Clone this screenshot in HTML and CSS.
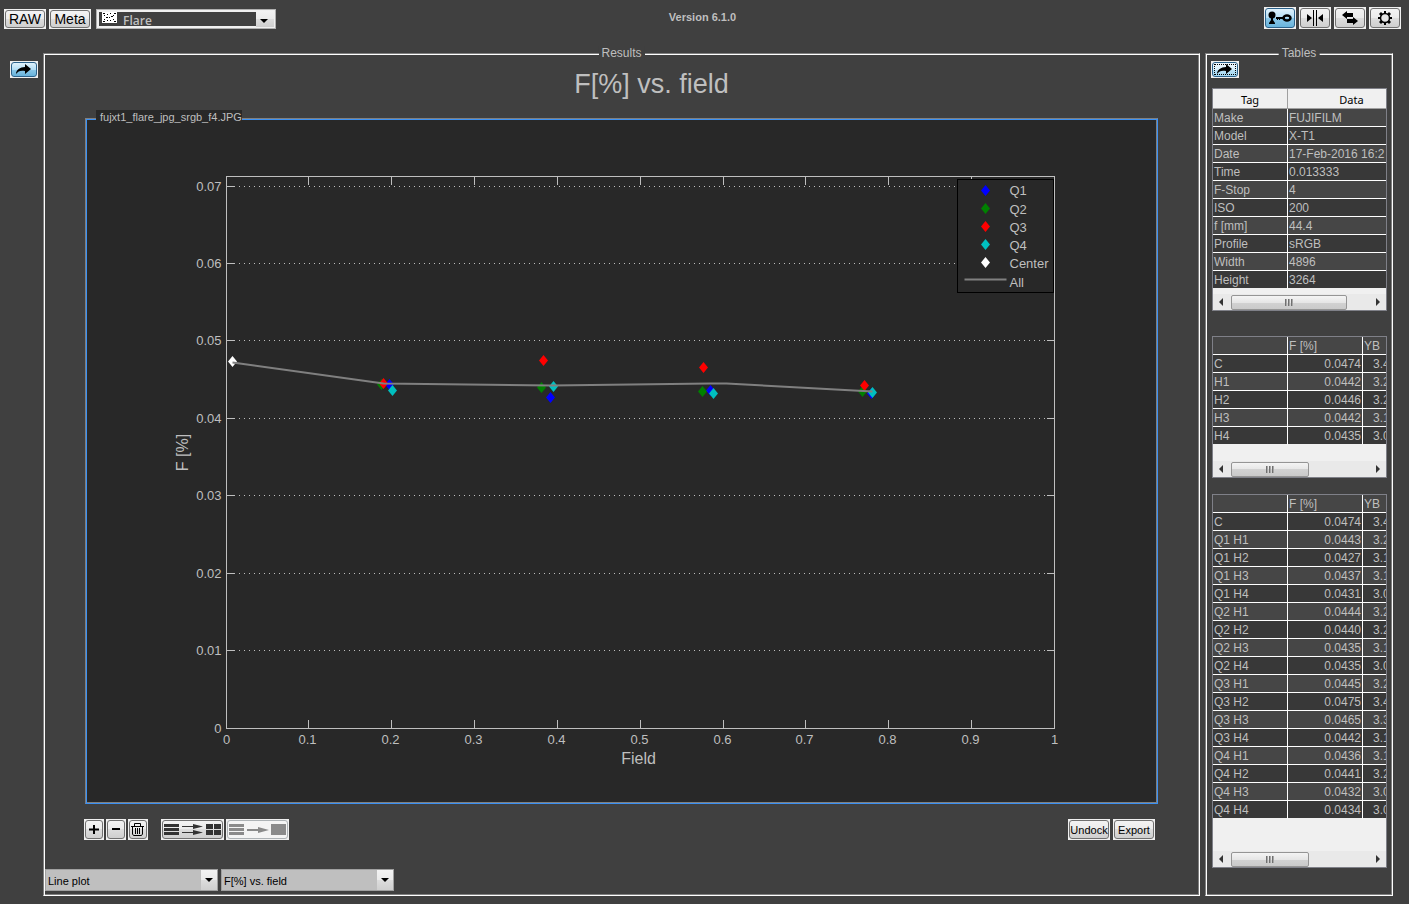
FILE: index.html
```html
<!DOCTYPE html>
<html lang="en">
<head>
    <meta charset="UTF-8">
    <meta name="viewport" content="width=device-width, initial-scale=1.0">
    <title>Flare</title>
    <link rel="stylesheet" href="styles.css">
</head>
<body>
    <header class="topbar">
        <div class="topbar-left">
            <button class="btn btn-mode">RAW</button>
            <button class="btn btn-mode">Meta</button>
            <div class="module-select">
                <svg class="module-icon" width="15" height="11" viewBox="0 0 15 11" shape-rendering="crispEdges">
                    <rect width="15" height="11" fill="#fff"/>
                    <path d="M1 1h2v1h-2zM2 3h1v1h-1zM5 2h1v1h-1zM8 1h1v1h-1zM12 1h2v1h-2zM11 3h1v1h-1zM4 5h2v1h-2zM7 5h1v1h-1zM9 4h2v1h-2zM2 7h1v1h-1zM5 8h1v1h-1zM8 8h1v1h-1zM11 7h1v1h-1zM1 9h2v1h-2zM12 9h2v1h-2z" fill="#000"/>
                </svg>
                <select aria-label="Module"><option>Flare</option></select>
                <span class="arrow"></span>
            </div>
        </div>
        <div class="version">Version 6.1.0</div>
        <div class="topbar-right">
            <button class="btn btn-tool active" aria-label="Key">
                <svg width="24" height="14" viewBox="0 0 24 14">
                    <circle cx="4" cy="4" r="3.500"/>
                    <path d="M3 5h2v4l2 3v1H1v-1l2-3z"/>
                    <path d="M8 6h9v2h-5v1h-1V8h-1v1H9V8H8z"/>
                    <ellipse cx="19" cy="7" rx="3.500" ry="2.500" fill="none" stroke="#000" stroke-width="2.500"/>
                </svg>
            </button>
            <button class="btn btn-tool" aria-label="Split">
                <svg width="18" height="16" viewBox="0 0 18 16">
                    <path d="M1 4l5 4-5 4zM17 4l-5 4 5 4zM7 0h1v16H7zM10 0h1v16h-1z"/>
                </svg>
            </button>
            <button class="btn btn-tool" aria-label="Swap">
                <svg width="18" height="14" viewBox="0 0 18 14">
                    <path d="M1 4l5-4v2h6v4H6v2zM17 10l-5 4v-2H6V8h6V6z"/>
                </svg>
            </button>
            <button class="btn btn-tool" aria-label="Settings">
                <svg width="16" height="16" viewBox="0 0 16 16">
                    <path d="M7 1h2v3H7zM7 12h2v3H7zM1 7h3v2H1zM12 7h3v2h-3zM2 4l2-2 2 2-2 2zM10 4l2-2 2 2-2 2zM2 12l2-2 2 2-2 2zM10 12l2-2 2 2-2 2z"/>
                    <circle cx="8" cy="8" r="4.500" fill="#e4e4e4" stroke="#000" stroke-width="1.500"/>
                </svg>
            </button>
        </div>
    </header>

    <main class="workspace">
        <div class="side">
            <button class="btn btn-fold active" aria-label="Toggle panel">
                <svg width="18" height="11" viewBox="0 0 18 11"><path d="M1 10c0-4 4-7 9-7V0l6 5-6 5V7C6 6 3 7 1 10z"/></svg>
            </button>
        </div>

        <section class="frame results">
            <h2 class="frame-title">Results</h2>
            <h1 class="plot-title">F[%] vs. field</h1>

            <div class="frame plot-panel">
                <h3 class="file-title">fujxt1_flare_jpg_srgb_f4.JPG</h3>
                <svg class="plot" viewBox="0 0 1071 684">
                    <defs>
                        <path id="mark" d="M0-5.500L4.500 0 0 5.500-4.500 0z"/>
                    </defs>
                    <g transform="translate(140.500 57.500)">
                        <path class="gridline" d="M12.500 10H828M12.500 87H828M12.500 164H828M12.500 242H828M12.500 319H828M12.500 397H828M12.500 474H828"/>
                        <path class="axis" d="M0 0H828V552H0z"/>
                        <path class="axis" d="M82 0v8M165 0v8M248 0v8M331 0v8M414 0v8M497 0v8M579 0v8M662 0v8M745 0v8"/>
                        <path class="axis" d="M82 552v-9M165 552v-9M248 552v-9M331 552v-9M414 552v-9M497 552v-9M579 552v-9M662 552v-9M745 552v-9"/>
                        <path class="axis" d="M0 10h8M0 87h8M0 164h8M0 242h8M0 319h8M0 397h8M0 474h8"/>
                        <path class="axis" d="M828 10h-8M828 87h-8M828 164h-8M828 242h-8M828 319h-8M828 397h-8M828 474h-8"/>

                        <g class="tick tick-y">
                            <text x="-5" y="14">0.07</text>
                            <text x="-5" y="91">0.06</text>
                            <text x="-5" y="168">0.05</text>
                            <text x="-5" y="246">0.04</text>
                            <text x="-5" y="323">0.03</text>
                            <text x="-5" y="401">0.02</text>
                            <text x="-5" y="478">0.01</text>
                            <text x="-5" y="556">0</text>
                        </g>
                        <g class="tick tick-x">
                            <text x="0" y="567">0</text>
                            <text x="81" y="567">0.1</text>
                            <text x="164" y="567">0.2</text>
                            <text x="247" y="567">0.3</text>
                            <text x="330" y="567">0.4</text>
                            <text x="413" y="567">0.5</text>
                            <text x="496" y="567">0.6</text>
                            <text x="578" y="567">0.7</text>
                            <text x="661" y="567">0.8</text>
                            <text x="744" y="567">0.9</text>
                            <text x="828" y="567">1</text>
                        </g>
                        <text class="axis-label" x="412" y="587">Field</text>
                        <text class="axis-label" transform="translate(-39 276) rotate(-90)">F [%]</text>

                        <g class="q1">
                            <use href="#mark" x="163" y="208"/>
                            <use href="#mark" x="324" y="221"/>
                            <use href="#mark" x="484" y="214"/>
                            <use href="#mark" x="645" y="217"/>
                        </g>
                        <g class="q2">
                            <use href="#mark" x="155" y="208"/>
                            <use href="#mark" x="315" y="211"/>
                            <use href="#mark" x="476" y="215"/>
                            <use href="#mark" x="636" y="215"/>
                        </g>
                        <g class="q3">
                            <use href="#mark" x="157" y="207"/>
                            <use href="#mark" x="317" y="184"/>
                            <use href="#mark" x="477" y="191"/>
                            <use href="#mark" x="638" y="209"/>
                        </g>
                        <g class="q4">
                            <use href="#mark" x="166" y="214"/>
                            <use href="#mark" x="327" y="210"/>
                            <use href="#mark" x="487" y="217"/>
                            <use href="#mark" x="646" y="216"/>
                        </g>
                        <use class="center" href="#mark" x="6" y="185"/>
                        <path class="all" d="M6 186L157 207 325 209 484 207 500 207 646 215"/>

                        <rect class="legend-box" x="731" y="3" width="96" height="113"/>
                        <use class="q1" href="#mark" x="759" y="14"/>
                        <use class="q2" href="#mark" x="759" y="32"/>
                        <use class="q3" href="#mark" x="759" y="50"/>
                        <use class="q4" href="#mark" x="759" y="68"/>
                        <use class="center" href="#mark" x="759" y="86"/>
                        <path class="all" d="M738 103h42"/>
                        <g class="tick">
                            <text x="783" y="18">Q1</text>
                            <text x="783" y="37">Q2</text>
                            <text x="783" y="55">Q3</text>
                            <text x="783" y="73">Q4</text>
                            <text x="783" y="91">Center</text>
                            <text x="783" y="110">All</text>
                        </g>
                    </g>
                </svg>
            </div>

            <div class="plot-toolbar">
                <div class="group">
                    <button class="btn btn-sq" aria-label="Add">
                        <svg width="10" height="9" viewBox="0 0 10 9"><path d="M4 0h2v3.500h4v2H6V9H4V5.500H0v-2h4z"/></svg>
                    </button>
                    <button class="btn btn-sq" aria-label="Remove">
                        <svg width="8" height="9" viewBox="0 0 8 9"><path d="M0 3h8v2H0z"/></svg>
                    </button>
                    <button class="btn btn-sq" aria-label="Delete">
                        <svg width="14" height="13" viewBox="0 0 14 13" fill="none" stroke="#000">
                            <path d="M0 3.500h13M3.500 3V.5h6V3M1.500 4v7l1 1.500h8l1-1.500V4M4.500 5v6M6.500 5v6M8.500 5v6"/>
                        </svg>
                    </button>
                </div>
                <div class="group">
                    <button class="btn btn-layout" aria-label="Multiple plots">
                        <svg width="57" height="11" viewBox="0 0 57 11" fill="#333">
                            <path d="M0 0h15v3H0zM0 4h15v3H0zM0 8h15v3H0zM42 0h7v5h-7zM50 0h7v5h-7zM42 6h7v5h-7zM50 6h7v5h-7z"/>
                            <path d="M18 2h11V0l10 2.500L29 5V3H18zM18 8h11V6l10 2.500L29 11V9H18z"/>
                        </svg>
                    </button>
                    <button class="btn btn-layout" aria-label="Single plot" disabled>
                        <svg width="57" height="11" viewBox="0 0 57 11" fill="#8a8a8a">
                            <path d="M0 0h15v3H0zM0 4h15v3H0zM0 8h15v3H0zM42 0h15v11H42z"/>
                            <path d="M18 5h11V3l11 3-11 3V7H18z"/>
                        </svg>
                    </button>
                </div>
                <div class="group group-right">
                    <button class="btn btn-text">Undock</button>
                    <button class="btn btn-text">Export</button>
                </div>
            </div>

            <div class="plot-selects">
                <div class="plot-select">
                    <select aria-label="Plot type"><option>Line plot</option></select>
                    <span class="arrow"></span>
                </div>
                <div class="plot-select">
                    <select aria-label="Plot data"><option>F[%] vs. field</option></select>
                    <span class="arrow"></span>
                </div>
            </div>
        </section>

        <section class="frame tables">
            <h2 class="frame-title">Tables</h2>
            <button class="btn btn-fold active focused" aria-label="Toggle tables">
                <svg width="18" height="11" viewBox="0 0 18 11"><path d="M1 10c0-4 4-7 9-7V0l6 5-6 5V7C6 6 3 7 1 10z"/></svg>
            </button>

            <div class="table-box meta">
                <table>
                    <thead><tr><th>Tag</th><th>Data</th></tr></thead>
                    <tbody>
                        <tr><td>Make</td><td>FUJIFILM</td></tr>
                        <tr><td>Model</td><td>X-T1</td></tr>
                        <tr><td>Date</td><td>17-Feb-2016 16:2</td></tr>
                        <tr><td>Time</td><td>0.013333</td></tr>
                        <tr><td>F-Stop</td><td>4</td></tr>
                        <tr><td>ISO</td><td>200</td></tr>
                        <tr><td>f [mm]</td><td>44.4</td></tr>
                        <tr><td>Profile</td><td>sRGB</td></tr>
                        <tr><td>Width</td><td>4896</td></tr>
                        <tr><td>Height</td><td>3264</td></tr>
                    </tbody>
                </table>
                <div class="scrollbar"><span class="left"></span><span class="thumb"></span><span class="right"></span></div>
            </div>

            <div class="table-box summary">
                <table>
                    <tbody>
                        <tr><td></td><td>F [%]</td><td>YB</td></tr>
                        <tr><td>C</td><td>0.0474</td><td>3.4</td></tr>
                        <tr><td>H1</td><td>0.0442</td><td>3.2</td></tr>
                        <tr><td>H2</td><td>0.0446</td><td>3.2</td></tr>
                        <tr><td>H3</td><td>0.0442</td><td>3.1</td></tr>
                        <tr><td>H4</td><td>0.0435</td><td>3.0</td></tr>
                    </tbody>
                </table>
                <div class="scrollbar"><span class="left"></span><span class="thumb"></span><span class="right"></span></div>
            </div>

            <div class="table-box detail">
                <table>
                    <tbody>
                        <tr><td></td><td>F [%]</td><td>YB</td></tr>
                        <tr><td>C</td><td>0.0474</td><td>3.4</td></tr>
                        <tr><td>Q1 H1</td><td>0.0443</td><td>3.2</td></tr>
                        <tr><td>Q1 H2</td><td>0.0427</td><td>3.1</td></tr>
                        <tr><td>Q1 H3</td><td>0.0437</td><td>3.1</td></tr>
                        <tr><td>Q1 H4</td><td>0.0431</td><td>3.0</td></tr>
                        <tr><td>Q2 H1</td><td>0.0444</td><td>3.2</td></tr>
                        <tr><td>Q2 H2</td><td>0.0440</td><td>3.2</td></tr>
                        <tr><td>Q2 H3</td><td>0.0435</td><td>3.1</td></tr>
                        <tr><td>Q2 H4</td><td>0.0435</td><td>3.0</td></tr>
                        <tr><td>Q3 H1</td><td>0.0445</td><td>3.2</td></tr>
                        <tr><td>Q3 H2</td><td>0.0475</td><td>3.4</td></tr>
                        <tr><td>Q3 H3</td><td>0.0465</td><td>3.3</td></tr>
                        <tr><td>Q3 H4</td><td>0.0442</td><td>3.1</td></tr>
                        <tr><td>Q4 H1</td><td>0.0436</td><td>3.1</td></tr>
                        <tr><td>Q4 H2</td><td>0.0441</td><td>3.2</td></tr>
                        <tr><td>Q4 H3</td><td>0.0432</td><td>3.0</td></tr>
                        <tr><td>Q4 H4</td><td>0.0434</td><td>3.0</td></tr>
                    </tbody>
                </table>
                <div class="scrollbar"><span class="left"></span><span class="thumb"></span><span class="right"></span></div>
            </div>
        </section>
    </main>
</body>
</html>
```
FILE: styles.css
```css
* {
    box-sizing: border-box;
}

body {
    margin: 0;
    min-height: 100vh;
    display: flex;
    flex-direction: column;
    background-color: #404040;
    color: #bfbfbf;
    font-family: "Liberation Sans", Arial, sans-serif;
    font-size: 12px;
}

h1, h2, h3 {
    margin: 0;
    font-weight: normal;
}

/* Buttons */
.btn {
    position: relative;
    isolation: isolate;
    display: flex;
    justify-content: center;
    align-items: center;
    flex: none;
    padding: 0;
    border: none;
    background-color: #f0f0f0;
    color: #000;
    font-family: inherit;
    cursor: pointer;
}

.btn::before {
    content: "";
    position: absolute;
    inset: 1px;
    z-index: -1;
    border: 1px solid #707070;
    border-radius: 3px;
    background: linear-gradient(#f3f3f3 0%, #ebebeb 50%, #dddddd 50%, #cfcfcf 100%);
}

.btn.active::before {
    border-color: #2c628b;
    background: linear-gradient(#e0f2fc 0%, #b4def5 50%, #8cc8e8 50%, #68b3db 100%);
}

.btn.focused::before {
    background: linear-gradient(#f0f9fe 0%, #d8effb 50%, #bce3f7 50%, #a4d8f2 100%);
}

.btn.focused::after {
    content: "";
    position: absolute;
    inset: 3px;
    border: 1px dotted #000;
}

.btn:disabled::before {
    border-color: #adb2b5;
    background: #f4f4f4;
}

.btn-mode {
    width: 42px;
    height: 20px;
    font-size: 14px;
}

.btn-tool {
    width: 32px;
    height: 22px;
}

.btn-fold {
    width: 28px;
    height: 17px;
}

.btn-sq {
    width: 20px;
    height: 21px;
}

.btn-layout {
    width: 63px;
    height: 21px;
}

.btn-text {
    width: 42px;
    height: 21px;
    font-size: 11px;
}

/* Top bar */
.topbar {
    display: grid;
    grid-template-columns: 1fr auto 1fr;
    padding: 7px 8px 0 4px;
    height: 53px;
}

.topbar-left {
    display: flex;
    gap: 3px;
    padding-top: 2px;
}

.topbar-right {
    display: flex;
    justify-content: flex-end;
    gap: 3px;
}

.version {
    padding-top: 4px;
    font-size: 11px;
    font-weight: bold;
    line-height: 13px;
}

/* Drop-downs */
select {
    appearance: none;
    width: 100%;
    height: 100%;
    border: none;
    border-radius: 0;
    outline: none;
    font-family: inherit;
}

.arrow {
    position: absolute;
    top: 1px;
    right: 1px;
    bottom: 1px;
    width: 16px;
    background: linear-gradient(#f3f3f3 0%, #ebebeb 50%, #dddddd 50%, #cfcfcf 100%);
    pointer-events: none;
}

.arrow::after {
    content: "";
    position: absolute;
    top: 8px;
    left: 4px;
    border: 4px solid transparent;
    border-top-color: #000;
    border-bottom: none;
}

.module-select {
    position: relative;
    width: 180px;
    height: 20px;
    margin-left: 2px;
    padding: 2px;
    border: 1px solid #b0b0b0;
    background-color: #f0f0f0;
}

.module-select select {
    padding: 3px 0 0 24px;
    background-color: #404040;
    color: #bfbfbf;
    font-family: "Open Sans", sans-serif;
    font-size: 12px;
    font-weight: 600;
    line-height: 12px;
}

.module-select .arrow {
    width: 18px;
}

.module-icon {
    position: absolute;
    top: 2px;
    left: 5px;
}

.plot-select {
    position: relative;
    width: 173px;
    height: 22px;
    border: 1px solid #a0a0a0;
}

.plot-select select {
    padding: 2px 2px 0;
    background-color: #bfbfbf;
    color: #000;
    font-size: 11px;
}

.plot-select .arrow {
    top: 0;
    right: 0;
    bottom: 0;
}

/* Etched frames */
.workspace {
    flex: 1;
    display: flex;
    padding: 0 16px 8px 0;
}

.side {
    width: 43px;
    padding: 8px 0 0 10px;
}

.frame {
    position: relative;
    border: 1px solid;
    border-color: #808080 #fff #fff #808080;
    box-shadow: inset 1px 1px #fff, inset -1px -1px #808080;
}

.frame-title {
    position: absolute;
    top: -8px;
    left: 50%;
    transform: translateX(-50%);
    padding: 0 3px;
    background-color: #404040;
    font-size: 12px;
    line-height: 14px;
}

.results {
    flex: 1;
    min-width: 0;
    display: flex;
    flex-direction: column;
    padding: 0 41px;
}

.plot-title {
    padding: 12px 0 0 60px;
    height: 64px;
    font-size: 27px;
    line-height: 36px;
    text-align: center;
}

.plot-panel {
    flex: 1;
    min-height: 0;
    background-color: #282828;
    border-color: #808080 #3b91f5 #3b91f5 #808080;
    box-shadow: inset 1px 1px #3b91f5, inset -1px -1px #808080;
}

.file-title {
    position: absolute;
    top: -9px;
    left: 10px;
    padding: 0 0 0 4px;
    background-color: #282828;
    font-size: 11px;
    line-height: 14px;
}

.plot {
    display: block;
    width: 100%;
    height: 100%;
}

.axis {
    fill: none;
    stroke: #bfbfbf;
    shape-rendering: crispEdges;
}

.gridline {
    stroke: #bfbfbf;
    stroke-dasharray: 1 4;
    shape-rendering: crispEdges;
}

.tick {
    fill: #bfbfbf;
    font-size: 13px;
}

.tick-y {
    text-anchor: end;
}

.tick-x {
    text-anchor: middle;
}

.axis-label {
    fill: #bfbfbf;
    font-size: 16px;
    text-anchor: middle;
}

.q1 { fill: #0000ff; }
.q2 { fill: #008000; }
.q3 { fill: #ff0000; }
.q4 { fill: #00bfbf; }
.center { fill: #fff; }

.all {
    fill: none;
    stroke: #808080;
    stroke-width: 2;
}

.legend-box {
    fill: #282828;
    stroke: #000;
    shape-rendering: crispEdges;
}

.plot-toolbar {
    display: flex;
    gap: 13px;
    margin: 15px 0 0 -1px;
    padding-right: 3px;
}

.group {
    display: flex;
    gap: 2px;
}

.group-right {
    gap: 3px;
    margin-left: auto;
}

.plot-selects {
    display: flex;
    gap: 3px;
    margin: 29px 0 4px -40px;
}

/* Tables */
.tables {
    width: 188px;
    margin-left: 5px;
    padding: 7px 5px 0;
}

.table-box {
    margin-left: 1px;
    width: 175px;
    overflow: hidden;
    border: 1px solid #7f8088;
    background-color: #f0f0f0;
}

table {
    width: 225px;
    table-layout: fixed;
    border-collapse: separate;
    border-spacing: 0;
}

th {
    height: 20px;
    padding: 3px 0 0;
    border-right: 1px solid #a0a0a0;
    border-bottom: 1px solid #a0a0a0;
    color: #000;
    font-family: "Noto Sans", sans-serif;
    font-size: 11px;
    font-weight: normal;
    line-height: 14px;
}

td {
    width: 75px;
    height: 18px;
    padding: 2px 1px 0;
    border-right: 1px solid #fff;
    border-bottom: 1px solid #fff;
    line-height: 15px;
    white-space: nowrap;
}

tr:nth-child(odd) td {
    background-color: #464646;
}

tr:nth-child(even) td {
    background-color: #383838;
}

tr:last-child td {
    border-bottom-color: #f0f0f0;
}

.meta {
    margin-top: 10px;
}

.meta table {
    width: 203px;
}

.meta th:first-child {
    width: 75px;
}

.summary {
    margin-top: 25px;
}

.detail {
    margin-top: 16px;
}

.summary tr:not(:first-child) td:nth-child(2),
.detail tr:not(:first-child) td:nth-child(2) {
    text-align: right;
}

.summary tr:not(:first-child) td:nth-child(3),
.detail tr:not(:first-child) td:nth-child(3) {
    padding-left: 10px;
}

/* Scroll bars */
.scrollbar {
    display: flex;
    align-items: center;
    height: 16px;
    margin-top: 5px;
    padding: 0 6px;
    background-color: #e9e9e9;
}

.summary .scrollbar {
    margin-top: 16px;
}

.detail .scrollbar {
    margin-top: 32px;
}

.scrollbar .left,
.scrollbar .right {
    border: 4px solid transparent;
}

.scrollbar .left {
    border-left: none;
    border-right-color: #333;
}

.scrollbar .right {
    margin-left: auto;
    border-right: none;
    border-left-color: #333;
}

.thumb {
    display: flex;
    justify-content: center;
    align-items: center;
    width: 78px;
    height: 15px;
    margin-left: 8px;
    border: 1px solid #959595;
    border-radius: 2px;
    background: linear-gradient(#f4f4f4 0%, #e6e6e6 50%, #d2d2d2 50%, #cacaca 100%);
}

.meta .thumb {
    width: 116px;
}

.thumb::after {
    content: "";
    width: 8px;
    height: 7px;
    background: repeating-linear-gradient(90deg, #707070 0 1px, #a8a8a8 1px 2px, transparent 2px 3px);
}
```
